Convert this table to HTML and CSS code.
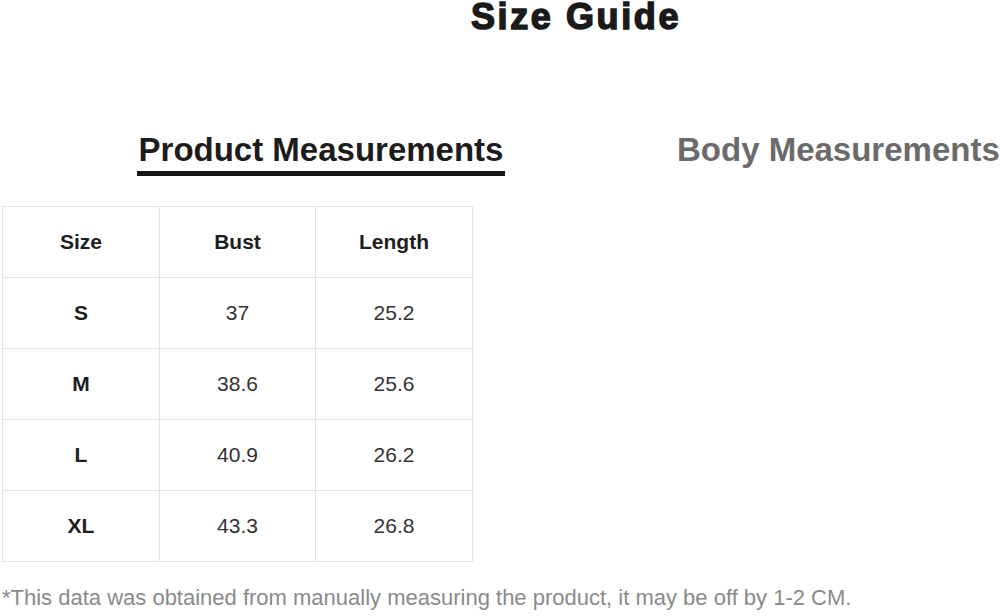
FILE: index.html
```html
<!DOCTYPE html>
<html>
<head>
<meta charset="utf-8">
<link rel="stylesheet" href="styles.css">
</head>
<body>
<div class="page">
  <h1 class="title">Size Guide</h1>
  <div class="tabs">
    <div class="tab tab-active">Product Measurements</div>
    <div class="tab tab-inactive">Body Measurements</div>
  </div>
  <table class="size-table">
    <thead>
      <tr><th>Size</th><th>Bust</th><th>Length</th></tr>
    </thead>
    <tbody>
      <tr><th>S</th><td>37</td><td>25.2</td></tr>
      <tr><th>M</th><td>38.6</td><td>25.6</td></tr>
      <tr><th>L</th><td>40.9</td><td>26.2</td></tr>
      <tr><th>XL</th><td>43.3</td><td>26.8</td></tr>
    </tbody>
  </table>
  <p class="note">*This data was obtained from manually measuring the product, it may be off by 1-2 CM.</p>
</div>
</body>
</html>
```

FILE: styles.css
```css
html, body {
  margin: 0;
  padding: 0;
  background: #fff;
}
body {
  font-family: "Liberation Sans", Arial, sans-serif;
  width: 1000px;
  height: 616px;
  overflow: hidden;
}
.page {
  display: flex;
  flex-direction: column;
}
.title {
  margin: 0;
  padding-left: 152px;
  text-align: center;
  font-size: 36px;
  line-height: 33px;
  font-weight: 700;
  letter-spacing: 2.6px;
  color: #1a1a1a;
  -webkit-text-stroke: 1.5px #1a1a1a;
}
.tabs {
  display: flex;
  align-items: flex-start;
  gap: 172px;
  margin-top: 99px;
  padding-left: 137px;
}
.tab {
  font-size: 33px;
  line-height: 36px;
  font-weight: 700;
  white-space: nowrap;
}
.tab-active {
  color: #1c1c1c;
  width: 368px;
  text-align: center;
  padding-bottom: 3px;
  border-bottom: 5px solid #151515;
}
.tab-inactive {
  color: #6b6b6b;
}
.size-table {
  margin-top: 30px;
  margin-left: 2px;
  border-collapse: collapse;
  table-layout: fixed;
  width: 471px;
}
.size-table th,
.size-table td {
  border: 1px solid #e3e3e3;
  height: 70px;
  padding: 0;
  text-align: center;
  vertical-align: middle;
  font-size: 21px;
}
.size-table th {
  font-weight: 700;
  color: #1e1e1e;
}
.size-table td {
  font-weight: 400;
  color: #333;
}
.size-table th:nth-child(1) { width: 156px; }
.size-table th:nth-child(2) { width: 155px; }
.size-table th:nth-child(3) { width: 156px; }
.note {
  margin: 23px 0 0 2px;
  font-size: 22px;
  line-height: 26px;
  color: #8a8a8a;
  white-space: nowrap;
}
```
